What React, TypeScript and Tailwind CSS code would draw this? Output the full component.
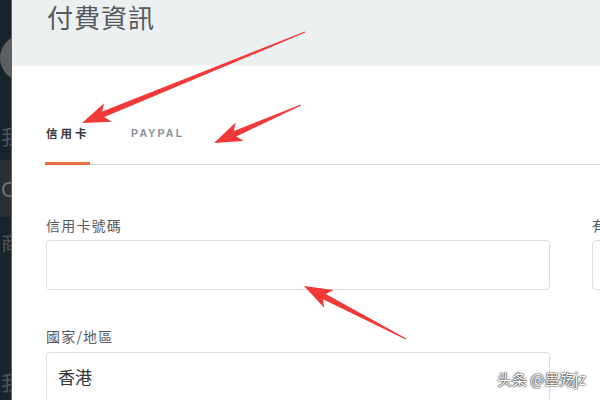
import React from "react";

const cjk = "font-['Noto_Sans_CJK_TC','Noto_Sans',sans-serif]";

type Pt = [number, number];

// tapered red arrow pointing from tail to tip
const arrowPoints = (tail: Pt, tip: Pt, head = 28, wing = 10) => {
  const dx = tip[0] - tail[0];
  const dy = tip[1] - tail[1];
  const len = Math.hypot(dx, dy);
  const ux = dx / len;
  const uy = dy / len;
  const nx = -uy;
  const ny = ux;
  const bx = tip[0] - ux * head;
  const by = tip[1] - uy * head;
  const nx2 = bx + ux * 5;
  const ny2 = by + uy * 5;
  const p = (x: number, y: number) => `${x.toFixed(1)},${y.toFixed(1)}`;
  return [
    p(tail[0] + nx * 0.6, tail[1] + ny * 0.6),
    p(nx2 + nx * 3, ny2 + ny * 3),
    p(bx + nx * wing, by + ny * wing),
    p(tip[0], tip[1]),
    p(bx - nx * wing, by - ny * wing),
    p(nx2 - nx * 3, ny2 - ny * 3),
    p(tail[0] - nx * 0.6, tail[1] - ny * 0.6),
  ].join(" ");
};

const arrows: [Pt, Pt][] = [
  [[305, 32], [82, 123]],
  [[301, 105], [214, 143]],
  [[406, 339], [304, 286]],
];

export default function App() {
  return (
    <div className={`relative flex w-[600px] h-[400px] overflow-hidden bg-white ${cjk}`}>
      {/* dark side strip */}
      <div className="relative w-[12px] shrink-0 overflow-hidden bg-[#19232a] border-r border-[#5f6468]">
        <div className="absolute left-[0px] top-[35px] w-[46px] h-[46px] rounded-full bg-[#5c6064]" />
        <div className="absolute left-0 top-[160px] w-full h-[57px] bg-[#283035]" />
        <div className="absolute left-[1px] top-[126px] text-[20px] leading-[22px] text-[#4f565b]">我</div>
        <div className="absolute left-[1px] top-[178px] text-[22px] leading-[24px] text-[#6d7276] font-['Liberation_Sans',sans-serif]">C</div>
        <div className="absolute left-[1px] top-[232px] text-[20px] leading-[22px] text-[#4f565b]">商</div>
        <div className="absolute left-[1px] top-[372px] text-[20px] leading-[22px] text-[#4f565b]">我</div>
      </div>

      {/* main panel */}
      <div className="flex-1 flex flex-col">
        {/* header */}
        <div className="h-[65px] shrink-0 bg-[#edf0f1] pl-[35px] shadow-[0_1px_1px_rgba(0,0,0,0.03)]">
          <h1 className="mt-[4px] text-[26px] leading-[26px] font-normal tracking-[1px] text-[#555a5e]">付費資訊</h1>
        </div>

        {/* tabs */}
        <div className="ml-[33px] mt-[55px] flex border-b border-[#d6d8da]">
          <div className="w-[45px] -mb-[1px] pb-[16px] border-b-[3px] border-[#e4703b] pl-[1px]">
            <span className="block whitespace-nowrap text-[11.5px] leading-[26px] font-bold tracking-[3px] text-[#33373a]">信用卡</span>
          </div>
          <div className="ml-[41px] pb-[16px]">
            <span className="block whitespace-nowrap text-[10.5px] leading-[26px] font-bold tracking-[2.2px] text-[#8a9096] font-['Liberation_Sans',sans-serif]">
              PAYPAL
            </span>
          </div>
        </div>

        {/* form */}
        <div className="ml-[34px] mt-[50px] grid grid-cols-[504px_200px] gap-x-[42px]">
          <div className="flex flex-col">
            <label className="text-[14px] leading-[20px] tracking-[1.2px] text-[#555a5e]">信用卡號碼</label>
            <div className="mt-[5px] h-[50px] rounded-[4px] border-[1.5px] border-[#dcdddf] bg-white" />
          </div>
          <div className="flex flex-col">
            <label className="text-[14px] leading-[20px] tracking-[1.2px] text-[#555a5e]">有效期限</label>
            <div className="mt-[5px] h-[50px] rounded-[4px] border-[1.5px] border-[#dcdddf] bg-white" />
          </div>
          <div className="flex flex-col mt-[36px]">
            <label className="text-[14px] leading-[20px] tracking-[1.2px] text-[#555a5e]">國家/地區</label>
            <div className="mt-[6px] h-[50px] rounded-[4px] border-[1.5px] border-[#dcdddf] bg-white flex items-center pl-[11px]">
              <span className="text-[17px] leading-[20px] text-[#333639]">香港</span>
            </div>
          </div>
        </div>
      </div>

      {/* annotation arrows */}
      <svg className="absolute inset-0 pointer-events-none" width="600" height="400" viewBox="0 0 600 400">
        {arrows.map(([tail, tip], i) => (
          <polygon key={i} points={arrowPoints(tail, tip)} fill="#f2393a" />
        ))}
      </svg>

      {/* watermark */}
      <div className="absolute left-[497px] top-[369px] text-[15px] leading-[20px] text-white [text-shadow:0_0_2px_#000,0_0_1px_#000]">
        头条 @墨殇jz
      </div>
    </div>
  );
}
